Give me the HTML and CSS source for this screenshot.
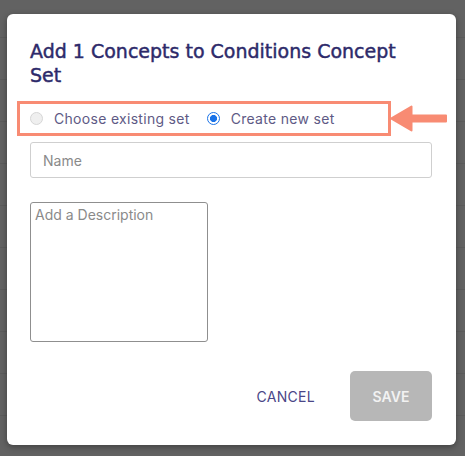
FILE: index.html
```html
<!DOCTYPE html>
<html lang="en">
<head>
<meta charset="utf-8">
<title>Add Concepts</title>
<link rel="stylesheet" href="styles.css">
</head>
<body>
<div class="dialog">
  <h1 class="title">Add 1 Concepts to Conditions Concept Set</h1>
  <div class="choice-box">
    <label class="choice"><span class="radio"></span><span class="choice-text">Choose existing set</span></label>
    <label class="choice"><span class="radio checked"></span><span class="choice-text">Create new set</span></label>
  </div>
  <svg class="pointer" width="60" height="30" viewBox="0 0 60 30" aria-hidden="true">
    <path d="M2 14.5 L22.5 2.5 L22.5 11.5 L57 11.5 L57 17.5 L22.5 17.5 L22.5 26.5 Z" fill="#f88b73" stroke="#f88b73" stroke-width="2" stroke-linejoin="round"/>
  </svg>
  <div class="field name-field"><span class="placeholder">Name</span></div>
  <div class="field desc-field"><span class="placeholder">Add a Description</span></div>
  <div class="actions">
    <span class="btn-cancel">CANCEL</span>
    <span class="btn-save">SAVE</span>
  </div>
</div>
</body>
</html>
```

FILE: styles.css
```css
html, body {
  margin: 0;
  padding: 0;
}
body {
  width: 465px;
  height: 456px;
  overflow: hidden;
  background-color: #626262;
  background-image: repeating-linear-gradient(to bottom, transparent 0, transparent 40px, #5b5b5b 40px, #5b5b5b 41px, transparent 41px, transparent 42px);
  background-position: 0 -3px;
  font-family: Inter, "Open Sans", sans-serif;
  padding: 14px 9px 11px 7px;
  box-sizing: border-box;
}
.dialog {
  position: relative;
  box-sizing: border-box;
  width: 449px;
  height: 431px;
  background: #ffffff;
  border-radius: 6px;
  box-shadow: 0 2px 6px rgba(0, 0, 0, 0.35);
  padding: 25px 24px 24px 23px;
  display: flex;
  flex-direction: column;
}
.title {
  margin: 0;
  font-family: "DejaVu Sans", Inter, sans-serif;
  font-size: 19px;
  line-height: 24px;
  font-weight: 500;
  -webkit-text-stroke: 0.45px #2d2a6a;
  color: #2d2a6a;
  width: 402px;
}
.choice-box {
  margin: 14px 0 0 -13px;
  width: 374px;
  height: 35px;
  box-sizing: border-box;
  border: 3px solid #f88b73;
  display: flex;
  align-items: center;
  padding-left: 10px;
  gap: 17px;
}
.choice {
  display: flex;
  align-items: center;
  gap: 11px;
}
.radio {
  width: 13px;
  height: 13px;
  box-sizing: border-box;
  border-radius: 50%;
  border: 1px solid #d6d6d6;
  background: #efefef;
}
.radio.checked {
  border: 1.5px solid #1a73e8;
  background: radial-gradient(circle, #1a73e8 0, #1a73e8 3.3px, #ffffff 3.8px, #ffffff 100%);
}
.choice-text {
  font-size: 14px;
  letter-spacing: 0.3px;
  color: #5e5a85;
}
.pointer {
  position: absolute;
  left: 382px;
  top: 90px;
}
.field {
  box-sizing: border-box;
  border-radius: 3px;
}
.placeholder {
  font-size: 14px;
  color: #8a8a8a;
}
.name-field {
  margin-top: 6px;
  width: 402px;
  height: 36px;
  border: 1px solid #cfcfcf;
  display: flex;
  align-items: center;
  padding-left: 12px;
}
.desc-field {
  margin-top: 24px;
  width: 178px;
  height: 140px;
  border: 1px solid #8f8f8f;
  padding: 2px 4px;
  line-height: 18px;
}
.actions {
  margin-top: auto;
  display: flex;
  justify-content: flex-end;
  align-items: center;
  gap: 35px;
}
.btn-cancel {
  font-size: 14px;
  color: #4a4687;
  letter-spacing: 0.3px;
}
.btn-save {
  width: 82px;
  height: 50px;
  border-radius: 5px;
  background: #b7b7b7;
  color: #f2f2f2;
  font-size: 14px;
  font-weight: 600;
  display: flex;
  align-items: center;
  justify-content: center;
}
```
